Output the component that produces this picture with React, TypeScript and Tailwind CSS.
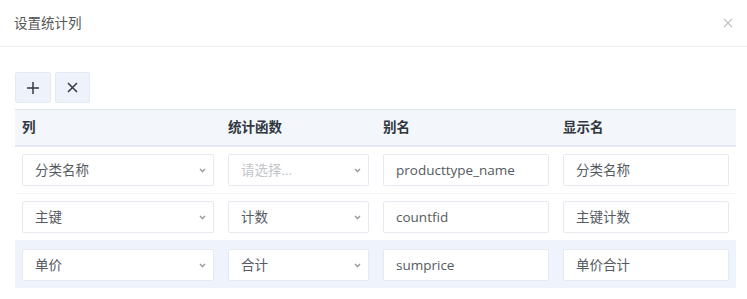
// Dialog for configuring aggregate columns on a report.
const ROWS = [
  { column: "分类名称", fn: "", alias: "producttype_name", label: "分类名称" },
  { column: "主键", fn: "计数", alias: "countfid", label: "主键计数" },
  { column: "单价", fn: "合计", alias: "sumprice", label: "单价合计" },
];

const FONT = { fontFamily: '"Open Sans", "Noto Sans CJK SC", sans-serif' };

function Chevron() {
  return (
    <svg width="7" height="5" viewBox="0 0 7 5" className="absolute right-[7px] top-[13px]">
      <path d="M1 1l2.5 2.5L6 1" fill="none" stroke="#9ea2a8" strokeWidth="1.6" />
    </svg>
  );
}

function Select({ value }: { value: string }) {
  return (
    <div className="relative h-[32px] rounded-[2px] border border-[#e6e9ef] bg-white pl-[12px] text-[13.5px] leading-[30px]">
      {value ? (
        <span className="text-[#555a60]">{value}</span>
      ) : (
        <span className="text-[#c2c5ca]">请选择...</span>
      )}
      <Chevron />
    </div>
  );
}

function Input({ value }: { value: string }) {
  return (
    <div className="h-[32px] rounded-[2px] border border-[#e6e9ef] bg-white pl-[12px] text-[13.5px] leading-[30px] text-[#555a60]">
      {value}
    </div>
  );
}

export default function App() {
  return (
    <div className="h-[299px] w-[747px] bg-white" style={FONT}>
      <div className="flex h-[47px] items-center justify-between border-b border-[#eceff4] pl-[14px] pr-[14px]">
        <span className="text-[13.5px] text-[#555]">设置统计列</span>
        <svg width="10" height="10" viewBox="0 0 10 10">
          <path d="M1 1l8 8M9 1l-8 8" stroke="#c4c4c4" strokeWidth="1.3" />
        </svg>
      </div>

      <div className="ml-[15px] mt-[25px] flex gap-[4px]">
        <button className="flex h-[31px] w-[36px] items-center justify-center rounded-[2px] border border-[#e4e9f3] bg-[#eef2fa]">
          <svg width="14" height="14" viewBox="0 0 14 14">
            <path d="M7 1v12M1 7h12" stroke="#333a45" strokeWidth="1.5" />
          </svg>
        </button>
        <button className="flex h-[31px] w-[35px] items-center justify-center rounded-[2px] border border-[#e4e9f3] bg-[#eef2fa]">
          <svg width="11" height="11" viewBox="0 0 11 11">
            <path d="M1 1l9 9M10 1l-9 9" stroke="#333a45" strokeWidth="1.5" />
          </svg>
        </button>
      </div>

      <div className="ml-[15px] mt-[6px] w-[721px]">
        <div className="grid h-[38px] grid-cols-[206px_155px_180px_180px] items-center border-t border-b-2 border-t-[#dfe4ec] border-b-[#e3e8f0] bg-[#f3f6fb] text-[13.5px] font-bold text-[#303640]">
          <div className="pl-[7px]">列</div>
          <div className="pl-[7px]">统计函数</div>
          <div className="pl-[7px]">别名</div>
          <div className="pl-[7px]">显示名</div>
        </div>
        {ROWS.map((r, i) => (
          <div
            key={r.alias}
            className={`grid h-[47px] grid-cols-[206px_155px_180px_180px] items-center ${
              i === 2 ? "bg-[#eff3fb]" : "border-b border-[#f1f3f7]"
            }`}
          >
            <div className="px-[7px]">
              <Select value={r.column} />
            </div>
            <div className="px-[7px]">
              <Select value={r.fn} />
            </div>
            <div className="px-[7px]">
              <Input value={r.alias} />
            </div>
            <div className="px-[7px]">
              <Input value={r.label} />
            </div>
          </div>
        ))}
      </div>
    </div>
  );
}
